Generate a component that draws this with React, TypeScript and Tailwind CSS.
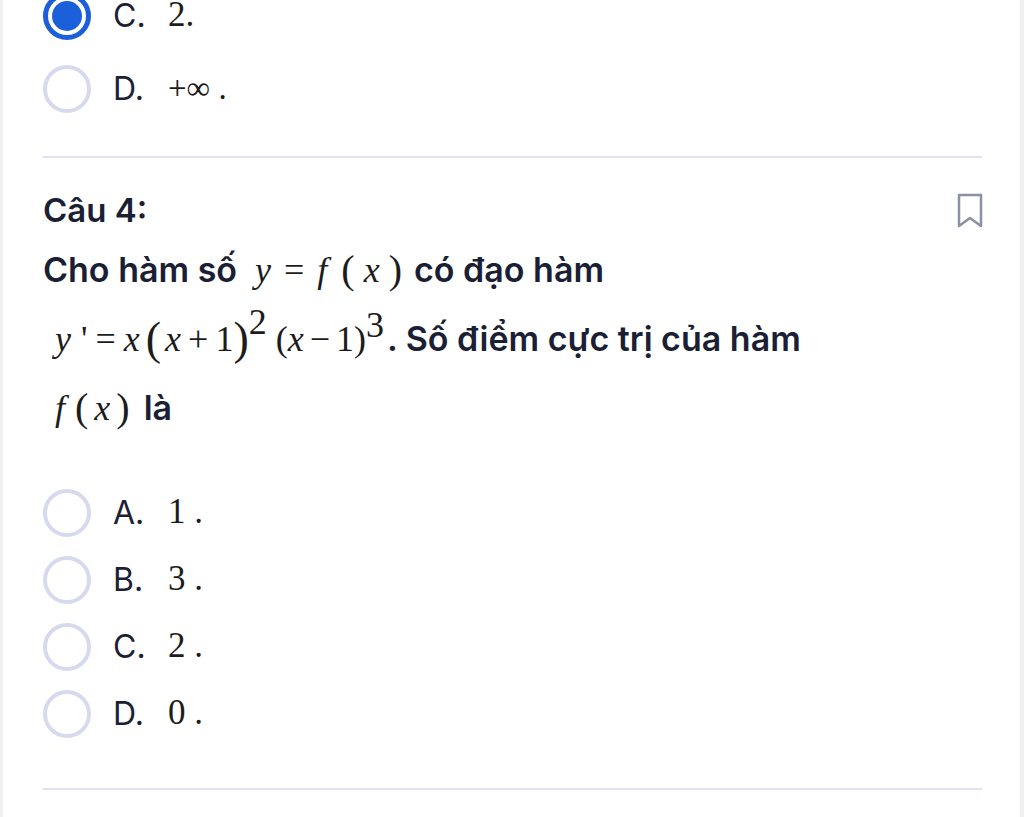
import React from 'react';

const sans = { fontFamily: 'Inter, "Noto Sans", sans-serif' };

function Radio({ checked }: { checked?: boolean }) {
  if (checked) {
    return (
      <div className="w-[48px] h-[48px] rounded-full border-[5px] border-[#1b5fd9] flex items-center justify-center shrink-0">
        <div className="w-[30px] h-[30px] rounded-full bg-[#1b5fd9]" />
      </div>
    );
  }
  return <div className="w-[48px] h-[48px] rounded-full border-[4px] border-[#d7daef] shrink-0" />;
}

function Option({ label, value, checked, rowClass }: { label: string; value: React.ReactNode; checked?: boolean; rowClass: string }) {
  return (
    <div className={`flex items-center ${rowClass}`}>
      <Radio checked={checked} />
      <span className="ml-[22px] w-[55px] text-[32px] text-[#1c2035]" style={sans}>
        {label}
      </span>
      <span className="text-[35px] text-[#1c1c1c] font-['Liberation_Serif',serif]">{value}</span>
    </div>
  );
}

// math pieces: italic variable / upright symbol
const I = ({ children, cls = '' }: { children: React.ReactNode; cls?: string }) => (
  <span className={`italic font-normal font-['Liberation_Serif',serif] text-[36px] text-[#1c1c1c] ${cls}`}>{children}</span>
);
const R = ({ children, cls = '' }: { children: React.ReactNode; cls?: string }) => (
  <span className={`font-normal font-['Liberation_Serif',serif] text-[36px] text-[#1c1c1c] ${cls}`}>{children}</span>
);

export default function App() {
  return (
    <div className="min-h-screen w-full bg-white border-l-[3px] border-r-[4px] border-[#f0f0f3] pl-[40px] pr-[38px] overflow-hidden">
      {/* previous question's last options */}
      <Option label="C." value="2." checked rowClass="h-[73px] -mt-[21px]" />
      <Option label="D." value={<span className="text-[33px]">+∞ .</span>} rowClass="h-[73px]" />

      <div className="mt-[31px] h-[2px] bg-[#e0e2f2]" />

      {/* Câu 4 */}
      <div className="mt-[29px] h-[48px] flex items-center justify-between">
        <span className="text-[33px] font-semibold text-[#1b1f36]" style={sans}>Câu 4:</span>
        <svg width="26" height="36" viewBox="0 0 26 36" className="mr-[-1px]">
          <path d="M2 2 H24 V33 L13 25 L2 33 Z" fill="none" stroke="#8b90a6" strokeWidth="2.5" strokeLinejoin="round" />
        </svg>
      </div>

      <div className="text-[34px] font-semibold text-[#1b1f36]" style={sans}>
        <div className="h-[69px] flex items-center whitespace-nowrap">
          <span>Cho hàm số</span>
          <span className="ml-[18px] flex items-center">
            <I>y</I>
            <R cls="mx-[13px] text-[28px]">=</R>
            <I>f</I>
            <R cls="ml-[14px] text-[40px]">(</R>
            <I cls="mx-[9px]">x</I>
            <R cls="text-[40px]">)</R>
          </span>
          <span className="ml-[12px]">có đạo hàm</span>
        </div>
        <div className="h-[69px] flex items-center whitespace-nowrap pl-[12px]">
          <I>y</I>
          <R cls="ml-[10px] text-[28px]">'</R>
          <R cls="mx-[8px] text-[28px]">=</R>
          <I>x</I>
          <R cls="ml-[6px] text-[46px]">(</R>
          <I cls="ml-[4px]">x</I>
          <R cls="mx-[7px] text-[28px]">+</R>
          <R>1</R>
          <R cls="text-[46px]">)</R>
          <R cls="text-[17px] -translate-y-[17px]">2</R>
          <R cls="ml-[9px]">(</R>
          <I>x</I>
          <R cls="mx-[6px]">−</R>
          <R>1</R>
          <R>)</R>
          <R cls="text-[17px] -translate-y-[14px]">3</R>
          <span className="ml-[3px]">. Số điểm cực trị của hàm</span>
        </div>
        <div className="h-[69px] flex items-center whitespace-nowrap pl-[12px]">
          <I>f</I>
          <R cls="ml-[10px] text-[40px]">(</R>
          <I cls="mx-[6px]">x</I>
          <R cls="text-[40px]">)</R>
          <span className="ml-[14px]">là</span>
        </div>
      </div>

      <div className="mt-[37px]">
        <Option label="A." value="1 ." rowClass="h-[67px]" />
        <Option label="B." value="3 ." rowClass="h-[67px]" />
        <Option label="C." value="2 ." rowClass="h-[67px]" />
        <Option label="D." value="0 ." rowClass="h-[67px]" />
      </div>

      <div className="mt-[41px] h-[2px] bg-[#e0e2f2]" />
    </div>
  );
}
